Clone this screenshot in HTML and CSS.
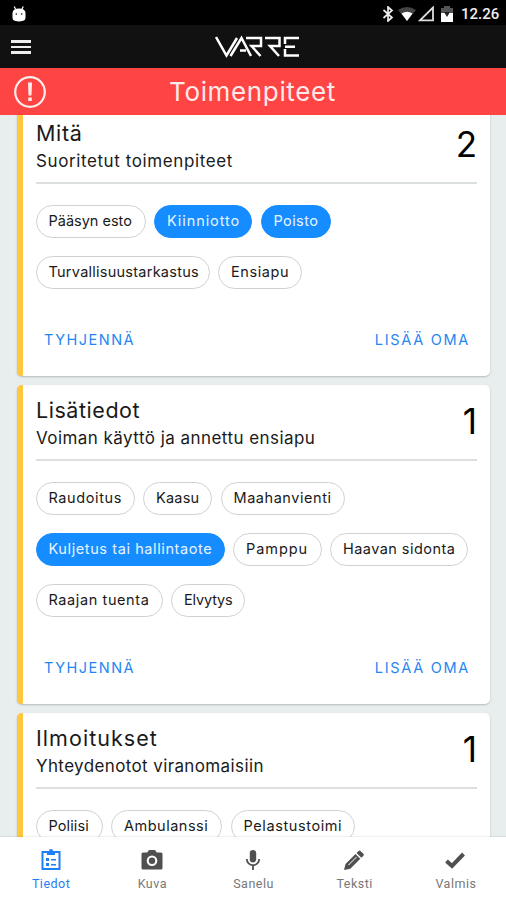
FILE: index.html
```
<!DOCTYPE html>
<html lang="fi">
<head>
<meta charset="utf-8">
<title>Varre</title>
<link rel="stylesheet" href="styles.css">
</head>
<body>
<div class="app">
  <div class="status">
    <svg class="droid" width="16" height="18" viewBox="0 0 16 18"><path d="M3.2 1.5 4.5 4M12.3 1.5 11 4" stroke="#fff" stroke-width="1.2"/><path d="M1.5 8.500Q1.500 3.500 8 3.500t6.500 5v4Q14.500 15.500 11.500 16L8 16.500 4.500 16Q1.500 15.500 1.500 12.500Z" fill="#fff"/><circle cx="5.300" cy="9" r=".8"/><circle cx="10.700" cy="9" r=".8"/></svg>
    <div class="status-right">
      <svg width="12" height="16" viewBox="0 0 12 16"><path d="M1.500 4 10 11.500 6 15V1L10 4.500 1.500 12" fill="none" stroke="#eee" stroke-width="1.700"/></svg>
      <svg class="wifi" width="18" height="16" viewBox="0 0 18 16"><path d="M0 4Q9-2 18 4L9 15Z" fill="#444"/><path d="M3.500 7.500Q9 4 14.500 7.500L9 15Z" fill="#fff"/></svg>
      <svg class="signal" width="17" height="16" viewBox="0 0 17 16"><path d="M2 14.300H15V1.500Z" fill="none" stroke="#ddd" stroke-width="1.800"/></svg>
      <svg class="battery" width="12" height="16" viewBox="0 0 12 16"><path d="M0 2h3V0h6v2h3v7H0z" fill="#555"/><path d="M0 7h12v9H0z" fill="#fff"/><path d="M3 6h6L6 11z" fill="#222"/></svg>
      <span class="clock">12.26</span>
    </div>
  </div>
  <header class="bar">
    <div class="burger"><i></i><i></i><i></i></div>
    <svg class="logo" width="86" height="24" viewBox="0 0 86 24" role="img" aria-label="Varre"><g fill="none" stroke="#fff" stroke-width="2.500"><path d="M1 2 11.500 20.500 22 3"/><path d="M15.500 21 26.500 3 36 21M25 15.500H31"/><path d="M31 3H46V11H36.500L45.500 21"/><path d="M50 3H64.500V11H55L64 21"/><path d="M84 3H70V9M84 20.500H70V14M70 11.700H80"/></g></svg>
  </header>
  <div class="alert">
    <svg class="alert-icon" width="34" height="34" viewBox="0 0 34 34"><circle cx="17" cy="17" r="14.800" fill="none" stroke="#ffeded" stroke-width="2.200"/><path d="M15 7.500h4l-.5 13h-3zM15.200 22.500h3.600v3.500h-3.600z" fill="#ffeded"/></svg>
    <h1>Toimenpiteet</h1>
  </div>
  <main class="content">
    <section class="card card-first">
      <div class="card-head"><div><h2 class="t-mita">Mitä</h2><p class="s-mita">Suoritetut toimenpiteet</p></div><span class="count">2</span></div>
      <div class="chips">
        <div class="row"><span class="chip w-paasyn">Pääsyn esto</span><span class="chip on w-kiinni">Kiinniotto</span><span class="chip on w-poisto">Poisto</span></div>
        <div class="row"><span class="chip w-turva">Turvallisuustarkastus</span><span class="chip w-ensiapu">Ensiapu</span></div>
      </div>
      <div class="actions"><span class="a-clear">TYHJENNÄ</span><span class="a-add">LISÄÄ OMA</span></div>
    </section>
    <section class="card">
      <div class="card-head"><div><h2 class="t-lisa">Lisätiedot</h2><p class="s-lisa">Voiman käyttö ja annettu ensiapu</p></div><span class="count">1</span></div>
      <div class="chips">
        <div class="row"><span class="chip w-raud">Raudoitus</span><span class="chip w-kaasu">Kaasu</span><span class="chip w-maahan">Maahanvienti</span></div>
        <div class="row"><span class="chip on w-kulj">Kuljetus tai hallintaote</span><span class="chip w-pamppu">Pamppu</span><span class="chip w-haavan">Haavan sidonta</span></div>
        <div class="row"><span class="chip w-raajan">Raajan tuenta</span><span class="chip w-elv">Elvytys</span></div>
      </div>
      <div class="actions"><span class="a-clear">TYHJENNÄ</span><span class="a-add">LISÄÄ OMA</span></div>
    </section>
    <section class="card">
      <div class="card-head"><div><h2 class="t-ilmo">Ilmoitukset</h2><p class="s-ilmo">Yhteydenotot viranomaisiin</p></div><span class="count">1</span></div>
      <div class="chips">
        <div class="row"><span class="chip w-poliisi">Poliisi</span><span class="chip w-ambu">Ambulanssi</span><span class="chip w-pelastus">Pelastustoimi</span></div>
      </div>
    </section>
  </main>
  <nav class="tabs">
    <div class="tab active"><svg width="24" height="24" viewBox="0 0 24 24"><path d="M3.500 4h17v17h-17z" fill="none" stroke="currentColor" stroke-width="2"/><path d="M8 3h2a2 2 0 0 1 4 0h2v4H8z" fill="currentColor"/><path d="M7 10h3v3H7zM7 15h3v3H7zM12 11h5v1.500h-5zM12 16h5v1.500h-5z" fill="currentColor"/></svg><span>Tiedot</span></div>
    <div class="tab"><svg width="24" height="24" viewBox="0 0 24 24"><path fill-rule="evenodd" fill="currentColor" d="M9 2 7.200 4.500H3A1.500 1.500 0 0 0 1.500 6v14A1.500 1.500 0 0 0 3 21.500h18a1.500 1.500 0 0 0 1.500-1.500V6A1.500 1.500 0 0 0 21 4.500h-4.200L15 2zm3 5.500a5.300 5.300 0 1 1 0 10.600 5.300 5.300 0 0 1 0-10.600z"/><circle cx="12" cy="12.800" r="3.200" fill="currentColor"/></svg><span>Kuva</span></div>
    <div class="tab"><svg width="24" height="24" viewBox="0 0 24 24"><rect x="8.800" y="2" width="6.400" height="12.500" rx="3.200" fill="currentColor"/><path d="M5.800 11a6.200 6.200 0 0 0 12.400 0M12 17v5" fill="none" stroke="currentColor" stroke-width="1.800"/></svg><span>Sanelu</span></div>
    <div class="tab"><svg width="24" height="24" viewBox="0 0 24 24"><path fill="currentColor" d="m2 22 1.500-6L13.500 6l4.800 4.800L8.300 20.700zM14.500 5l2-2q1-1 2 0L21.400 5.800q1 1 0 2l-2 2z"/><path d="m6.500 17 8-8" stroke="#fff" stroke-width="1"/></svg><span>Teksti</span></div>
    <div class="tab"><svg width="24" height="24" viewBox="0 0 24 24"><path d="m3.500 13 5.500 5L20.500 6" fill="none" stroke="currentColor" stroke-width="4"/></svg><span>Valmis</span></div>
  </nav>
</div>
</body>
</html>
```
FILE: styles.css
```
* { box-sizing: border-box; }
body { margin: 0; font-family: Inter, "Liberation Sans", sans-serif; color: #1a1a1a; }
h1, h2, p { margin: 0; font-weight: 400; white-space: nowrap; }
svg { display: block; flex: none; }
.app { width: 506px; height: 900px; display: flex; flex-direction: column; overflow: hidden; background: #e8edee; }

.status { flex: none; height: 25px; background: #000; display: flex; justify-content: space-between; align-items: center; padding: 2px 8px 0 11px; }
.status-right { display: flex; align-items: center; }
.wifi { margin-left: 4px; }
.signal { margin-left: 2px; }
.battery { margin-left: 6px; }
.clock { margin-left: 8px; width: 37px; font: 500 15px/20px Roboto, sans-serif; color: #eee; white-space: nowrap; }

.bar { flex: none; height: 43px; background: #111; display: flex; align-items: center; padding-left: 11px; }
.burger { width: 20px; display: grid; gap: 3px; margin-top: 1px; }
.burger i { height: 2.500px; background: #eee; }
.logo { margin: 1px 0 0 184px; }

.alert { flex: none; height: 47px; background: #ff4444; display: flex; align-items: center; padding-left: 13px; }
.alert h1 { margin-left: 122px; font-size: 26px; line-height: 32px; color: #ffe9e9; letter-spacing: .65px; }

.content { flex: 1; min-height: 0; overflow: hidden; padding: 0 16px 0 17px; }
.card { margin-bottom: 9px; background: #fff; border-left: 6px solid #ffc63f; border-radius: 5px; box-shadow: 0 1px 2px rgba(0, 0, 0, .22); padding: 11px 13px 22.500px; }
.card-first { margin-top: -7px; }
.card-head { height: 65px; border-bottom: 2px solid #dcdfdf; display: flex; justify-content: space-between; }
.card-head h2 { font-size: 21.500px; line-height: 28px; }
.card-head p { font-size: 17px; line-height: 24px; margin-top: 2px; }
.t-mita { letter-spacing: .7px; }
.t-lisa { letter-spacing: .55px; }
.t-ilmo { letter-spacing: 1.050px; }
.s-mita { letter-spacing: .6px; }
.s-lisa { letter-spacing: .45px; }
.s-ilmo { letter-spacing: .38px; }
.count { font-size: 35px; line-height: 50px; color: #000; }
.chips { margin-left: -.5px; padding-top: 21px; display: grid; gap: 18px; }
.row { display: flex; gap: 8.500px; }
.chip { flex: none; height: 33px; border: 1px solid #cfd2d3; border-radius: 17px; padding-left: 12px; font-size: 14.500px; line-height: 30px; white-space: nowrap; }
.chip.on { background: #158cff; border-color: #158cff; color: #e8f4ff; }
.w-paasyn { width: 110px; letter-spacing: 0; }
.w-kiinni { width: 98px; letter-spacing: .9px; }
.w-poisto { width: 70px; letter-spacing: .4px; }
.w-turva { width: 174px; letter-spacing: .25px; }
.w-ensiapu { width: 83.500px; letter-spacing: .6px; }
.w-raud { width: 99px; letter-spacing: .6px; }
.w-kaasu { width: 69px; letter-spacing: .2px; }
.w-maahan { width: 124.500px; letter-spacing: .55px; }
.w-kulj { width: 189px; letter-spacing: .6px; }
.w-pamppu { width: 88.500px; letter-spacing: .95px; }
.w-haavan { width: 138px; letter-spacing: .45px; }
.w-raajan { width: 127px; letter-spacing: .6px; }
.w-elv { width: 74px; letter-spacing: -.15px; }
.w-poliisi { width: 67px; letter-spacing: .1px; }
.w-ambu { width: 111px; letter-spacing: .5px; }
.w-pelastus { width: 124.500px; letter-spacing: .6px; }
.actions { display: flex; justify-content: space-between; margin-top: 36.500px; padding: 0 7px 0 8px; height: 28px; font-size: 14.500px; line-height: 28px; color: #2486f5; letter-spacing: 1.500px; }
.a-add { letter-spacing: 1.700px; }

.tabs { flex: none; height: 63px; background: #fff; display: flex; box-shadow: 0 -1px 1px rgba(0, 0, 0, .06); }
.tab { flex: 1; display: flex; flex-direction: column; align-items: center; padding-top: 11px; font: 400 12.500px/16px Roboto, sans-serif; letter-spacing: .5px; color: #777; }
.tab svg { color: #505050; }
.tab span { margin: 4px 0 0 1px; }
.tab.active, .tab.active svg { color: #1f80f5; }
```
